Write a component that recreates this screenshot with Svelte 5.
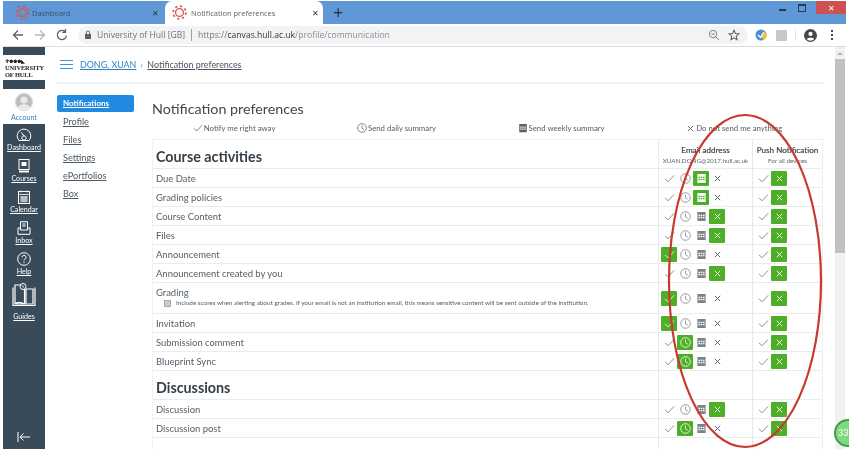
<script>
  const menu = ['Profile', 'Files', 'Settings', 'ePortfolios', 'Box'];
  const sections = [
    { title: 'Course activities', head: true, rows: [
      ['Due Date', 2], ['Grading policies', 2], ['Course Content', 3], ['Files', 3],
      ['Announcement', 0], ['Announcement created by you', 3],
      ['Grading', 0, 'Include scores when alerting about grades. If your email is not an institution email, this means sensitive content will be sent outside of the institution.'],
      ['Invitation', 0], ['Submission comment', 1], ['Blueprint Sync', 1]
    ]},
    { title: 'Discussions', rows: [['Discussion', 3], ['Discussion post', 1]] },
    { title: 'Conversations', rows: [] }
  ];
  const kinds = [0, 1, 2, 3];
  const sizes = [11, 11, 11, 9];
</script>

{#snippet glyph(kind, size = 11)}
  <svg class="glyph" width={size} height={size} viewBox="0 0 12 12" aria-hidden="true">
    {#if kind === 0}
      <path d="M1.2 6.4 4.4 9.6 11 2.6" fill="none" stroke="currentColor" stroke-width="0.9"/>
    {:else if kind === 1}
      <circle cx="6" cy="6" r="5.2" fill="none" stroke="currentColor" stroke-width="0.9"/>
      <path d="M6 2.8V6.3L8.5 7.8" fill="none" stroke="currentColor" stroke-width="0.9"/>
    {:else if kind === 2}
      <path fill-rule="evenodd" fill="currentColor" d="M1.5 1.2h9v9.8h-9zM2.7 4.2v1.5h1.7V4.2zM5.2 4.2v1.5h1.7V4.2zM7.7 4.2v1.5h1.6V4.2zM2.7 6.500V8h1.7V6.500zM5.2 6.500V8h1.7V6.500zM7.7 6.500V8h1.6V6.500z"/>
    {:else}
      <path d="M2.4 2.4 9.6 9.6M9.6 2.4 2.4 9.6" fill="none" stroke="currentColor" stroke-width="1.200"/>
    {/if}
  </svg>
{/snippet}

{#snippet canvasLogo()}
  <svg width="15" height="15" viewBox="0 0 16 16" aria-hidden="true">
    <circle cx="8" cy="8" r="4.2" fill="none" stroke="#d9554a" stroke-width="1.400"/>
    <circle cx="8" cy="8" r="6.8" fill="none" stroke="#d9554a" stroke-width="1.800" stroke-dasharray="2.4 2.9"/>
  </svg>
{/snippet}

{#snippet choices(active)}
  <div class="choices">
    {#each kinds as k}
      <span class="choice k{k}" class:on={k === active}>{@render glyph(k, sizes[k])}</span>
    {/each}
  </div>
{/snippet}

<div class="page">
  <header class="tabs">
    <div class="tab back">
      {@render canvasLogo()}
      <span class="tabname">Dashboard</span>
      <span class="tabx">✕</span>
    </div>
    <div class="tab front">
      {@render canvasLogo()}
      <span class="tabname">Notification preferences</span>
      <span class="tabx">✕</span>
    </div>
    <span class="plus">+</span>
    <div class="winctl">
      <span class="min"></span>
      <span class="restore"></span>
      <span class="close">✕</span>
    </div>
  </header>

  <div class="toolbar">
    <svg class="tool first" width="14" height="14" viewBox="0 0 14 14"><path d="M12 7H2.500M7 2.500 2.500 7 7 11.500" fill="none" stroke="#5f6368" stroke-width="1.300"/></svg>
    <svg class="tool" width="14" height="14" viewBox="0 0 14 14"><path d="M2 7h9.500M7 2.500 11.500 7 7 11.500" fill="none" stroke="#b4b8bd" stroke-width="1.300"/></svg>
    <svg class="tool" width="14" height="14" viewBox="0 0 14 14"><path d="M11.500 7.500A4.600 4.600 0 1 1 10 3.500M10.500 1v3.300H7.200" fill="none" stroke="#5f6368" stroke-width="1.300"/></svg>
    <div class="omni">
      <svg width="8" height="10" viewBox="0 0 8 10"><rect x="1" y="4" width="6" height="5" fill="#5f6368"/><path d="M2.300 4V2.800a1.700 1.700 0 0 1 3.400 0V4" fill="none" stroke="#5f6368"/></svg>
      <span class="org">University of Hull [GB]</span>
      <span class="bar"></span>
      <span class="url">https://<b>canvas.hull.ac.uk</b><i>/profile/communication</i></span>
      <span class="spacer"></span>
      <svg width="12" height="12" viewBox="0 0 13 13"><circle cx="5.500" cy="5.500" r="4" fill="none" stroke="#7a7f85"/><path d="M8.500 8.500 12 12M3.500 5.500h4" stroke="#7a7f85" fill="none"/></svg>
      <svg class="star" width="12" height="12" viewBox="0 0 13 13"><path d="M6.500 1.300 8 4.900l3.900.3-3 2.500.9 3.800-3.300-2-3.300 2 .9-3.800-3-2.500 3.900-.3z" fill="none" stroke="#5a5f65" stroke-width="1.100"/></svg>
    </div>
    <svg class="ext" width="12" height="12" viewBox="0 0 12 12"><circle cx="6" cy="6" r="5.500" fill="#4d8fd6"/><path d="M6 6 11 3A5.500 5.500 0 0 1 8 11z" fill="#ecc13c"/><path d="M3 6 5.500 8.500 9 3" fill="none" stroke="#fff" stroke-width="1.300"/></svg>
    <span class="ext2"></span>
    <span class="sep"></span>
    <svg class="acct" width="13" height="13" viewBox="0 0 13 13"><circle cx="6.500" cy="6.500" r="6.500" fill="#44484d"/><circle cx="6.500" cy="4.900" r="2.100" fill="#fff"/><path d="M2.700 10c1-1.700 6.600-1.700 7.600 0a5 5 0 0 1-7.600 0z" fill="#fff"/></svg>
    <span class="dots"><i></i><i></i><i></i></span>
  </div>

  <div class="body">
    <nav class="rail">
      <div class="logo">
        <span class="crest">♆♚♚♚◣</span>
        <span>UNIVERSITY</span>
        <span>OF HULL</span>
      </div>
      <a class="account" href="#a">
        <svg width="18" height="18" viewBox="0 0 18 18"><circle cx="9" cy="9" r="8.500" fill="#bdbdbd" stroke="#d5d5d5"/><circle cx="9" cy="7" r="3.500" fill="#e8e8e8"/><path d="M2.800 15c1-5 11.400-5 12.400 0a8.500 8.500 0 0 1-12.400 0z" fill="#e8e8e8"/></svg>
        <span>Account</span>
      </a>
      <a class="item" href="#d">
        <svg width="16" height="14" viewBox="0 0 16 14"><path d="M3 12.500A6.800 6.800 0 1 1 13 12.500" fill="none" stroke="#fff"/><path d="M3 12.500h10M8 8 5.500 4.500M5.800 10a2.200 2.200 0 1 0 4.400 0 2.200 2.200 0 0 0-4.400 0z" fill="none" stroke="#fff"/></svg>
        <span>Dashboard</span>
      </a>
      <a class="item" href="#c">
        <svg width="14" height="14" viewBox="0 0 14 14"><rect x="2" y=".5" width="10" height="10" fill="none" stroke="#fff"/><rect x="4.500" y="3" width="5" height="4" fill="#fff"/><path d="M2 12.500h10" stroke="#fff" stroke-width="2"/></svg>
        <span>Courses</span>
      </a>
      <a class="item" href="#l">
        <svg width="14" height="14" viewBox="0 0 14 14"><rect x="1.500" y="1.500" width="11" height="12" fill="none" stroke="#fff"/><path d="M1.500 4.500h11M3 7h8M3 9h8M3 11h8M5 6v6.500M7 6v6.500M9 6v6.500M4 .5v2M10 .5v2" fill="none" stroke="#fff" stroke-width=".8"/></svg>
        <span>Calendar</span>
      </a>
      <a class="item" href="#i">
        <svg width="14" height="14" viewBox="0 0 14 14"><path d="M3.500 8V.7h7V8M1 7h2.500v2h7V7H13v6.300H1zM5.300 3h3.400M5.300 5h3.400" fill="none" stroke="#fff"/></svg>
        <span>Inbox</span>
      </a>
      <a class="item" href="#h">
        <svg width="14" height="14" viewBox="0 0 14 14"><circle cx="7" cy="7" r="6.300" fill="none" stroke="#fff"/><path d="M5 5.300a2 2 0 1 1 2.800 1.800c-.6.300-.8.700-.8 1.400M7 9.600v1.400" fill="none" stroke="#fff"/></svg>
        <span>Help</span>
      </a>
      <a class="item guides" href="#g">
        <svg width="24" height="24" viewBox="0 0 24 24"><path d="M1 4.500v18h22v-18M3 2h8l1.500 1.500V21H3zM14 6h7v15h-7zM3 21c3-3 6-2 9.500 0" fill="none" stroke="#fff" stroke-width="1.200"/><circle cx="11" cy="3.500" r="3" fill="#394b58" stroke="#fff"/><path d="M9.800 2.400 12.200 4.600" stroke="#fff"/></svg>
        <span>Guides</span>
      </a>
      <span class="grow"></span>
      <svg class="collapse" width="14" height="10" viewBox="0 0 14 10"><path d="M1 0v10M13 5H3M6.500 1.500 3 5 6.500 8.500" fill="none" stroke="#fff"/></svg>
    </nav>

    <div class="content">
      <div class="crumbs">
        <span class="burger"><i></i><i></i><i></i></span>
        <a class="user" href="#u">DONG, XUAN</a>
        <span class="chev">›</span>
        <a class="current" href="#n">Notification preferences</a>
      </div>
      <div class="columns">
        <aside class="menu">
          <a class="sel" href="#n">Notifications</a>
          {#each menu as m}<a href="#m">{m}</a>{/each}
        </aside>
        <main class="main">
          <h1>Notification preferences</h1>
          <div class="legend">
            <span>{@render glyph(0, 10)} Notify me right away</span>
            <span>{@render glyph(1, 10)} Send daily summary</span>
            <span>{@render glyph(2, 10)} Send weekly summary</span>
            <span>{@render glyph(3, 9)} Do not send me anything</span>
          </div>
          <div class="table">
            {#each sections as s}
              <div class="row sect">
                <h2 class="label">{s.title}</h2>
                <div class="cell colhead">
                  {#if s.head}<strong>Email address</strong><small>XUAN.DONG@2017.hull.ac.uk</small>{/if}
                </div>
                <div class="cell colhead push">
                  {#if s.head}<strong>Push Notification</strong><small>For all devices</small>{/if}
                </div>
              </div>
              {#each s.rows as r}
                <div class="row" class:tall={r[2]}>
                  <div class="label">
                    {r[0]}
                    {#if r[2]}<div class="note"><span class="box"></span>{r[2]}</div>{/if}
                  </div>
                  <div class="cell">{@render choices(r[1])}</div>
                  <div class="cell push">
                    <div class="choices">
                      <span class="choice k0">{@render glyph(0)}</span>
                      <span class="choice k3 on">{@render glyph(3, 9)}</span>
                    </div>
                  </div>
                </div>
              {/each}
            {/each}
          </div>
        </main>
      </div>
    </div>

    <div class="scrollbar">
      <span class="up"></span>
      <span class="thumb"></span>
    </div>
  </div>

  <svg class="ring" width="849" height="449" viewBox="0 0 849 449" aria-hidden="true">
    <ellipse cx="745" cy="281" rx="76" ry="166" fill="none" stroke="#c8392e" stroke-width="2.200"/>
  </svg>
  <div class="bubble">33</div>
</div>

<style>
  :global(body) { margin: 0; background: #fff; }
  .page {
    position: relative;
    width: 849px;
    height: 449px;
    overflow: hidden;
    display: flex;
    flex-direction: column;
    padding: 1px 3px 0 3px;
    box-sizing: border-box;
    background: #fff;
    font-family: Lato, "Open Sans", sans-serif;
    color: #4d5963;
    filter: blur(0.4px);
  }
  a { color: inherit; }

  .tabs {
    height: 23px;
    flex: none;
    background: #6097d6;
    display: flex;
    align-items: stretch;
    font-family: "Open Sans", sans-serif;
    font-size: 7.500px;
  }
  .tab {
    display: flex;
    align-items: center;
    box-sizing: border-box;
    border-radius: 7px 7px 0 0;
  }
  .tab.back { width: 162px; padding-left: 12px; color: #33506f; }
  .tab.front { width: 158px; padding-left: 7px; background: #fff; color: #5f6368; }
  .tabname { margin-left: 4px; flex: 1; }
  .tab.back .tabname { margin-left: 2px; }
  .tabx { font-size: 8px; color: #333; margin-right: 4px; }
  .tab.back .tabx { margin-right: 6px; }
  .plus { font-size: 18px; color: #1f2d3d; margin-left: 10px; line-height: 23px; }
  .winctl { margin-left: auto; display: flex; align-items: flex-start; height: 13px; }
  .min { width: 7px; height: 2px; background: #2b3b4e; margin: 8px 12px 0 0; }
  .restore { width: 6px; height: 5px; border: 1.500px solid #2b3b4e; border-top-width: 2.500px; margin: 3px 10px 0 0; }
  .close { width: 30px; height: 13px; background: #cf5050; color: #fff; font-size: 8px; line-height: 13px; text-align: center; }

  .toolbar {
    height: 23px;
    flex: none;
    box-sizing: border-box;
    display: flex;
    align-items: center;
    border-bottom: 1px solid #dcdcdc;
    background: #fff;
  }
  .tool { margin-right: 8px; flex: none; }
  .tool.first { margin-left: 8px; }
  .omni {
    width: 670px;
    margin-left: 1px;
    height: 18px;
    flex: none;
    box-sizing: border-box;
    padding: 0 8px 0 6px;
    background: #f1f3f4;
    border-radius: 9px;
    display: flex;
    align-items: center;
    font-family: "Open Sans", sans-serif;
    font-size: 8.600px;
    color: #70757a;
    white-space: nowrap;
  }
  .org { margin-left: 5px; }
  .bar { width: 1px; height: 12px; background: #9aa0a6; margin: 0 6px; }
  .url b { font-weight: 400; color: #33373b; }
  .url i { font-style: normal; color: #8b9096; }
  .spacer { flex: 1; }
  .star { margin-left: 8px; }
  .ext { margin-left: 7px; flex: none; }
  .ext2 { width: 11px; height: 11px; background: #c4c8ca; margin-left: 9px; flex: none; }
  .sep { width: 1px; height: 12px; background: #e3e3e3; margin: 0 8px; flex: none; }
  .acct { flex: none; }
  .dots { display: flex; flex-direction: column; gap: 2px; margin-left: 14px; }
  .dots i { width: 2px; height: 2px; background: #44484d; }

  .body { flex: 1; display: flex; min-height: 0; }

  .rail {
    width: 42px;
    flex: none;
    padding-top: 8px;
    background: #394b58;
    display: flex;
    flex-direction: column;
    align-items: center;
    color: #fff;
    font-size: 7.100px;
    box-sizing: border-box;
    padding-bottom: 7px;
  }
  .logo {
    align-self: stretch;
    height: 25px;
    background: #fff;
    color: #222;
    font: 700 6.400px/6.500px "Liberation Serif", serif;
    display: flex;
    flex-direction: column;
    padding: 4px 0 0 2px;
    box-sizing: border-box;
    letter-spacing: -0.1px;
    white-space: nowrap;
  }
  .crest { font-size: 5px; line-height: 6px; letter-spacing: 0; }
  .account {
    margin-top: 9px;
    align-self: stretch;
    height: 35px;
    background: #fff;
    color: #2b85c5;
    display: flex;
    flex-direction: column;
    align-items: center;
    padding-top: 4px;
    box-sizing: border-box;
    text-decoration: none;
    gap: 2px;
  }
  .item {
    margin-top: 3px;
    height: 28px;
    display: flex;
    flex-direction: column;
    align-items: center;
    justify-content: flex-end;
    gap: 1px;
    color: #fff;
    text-decoration: underline;
  }
  .account + .item { margin-top: 0; }
  .guides { height: 42px; margin-top: 3px; gap: 5px; }
  .grow { flex: 1; }

  .content { width: 778px; flex: none; padding-left: 12px; box-sizing: border-box; }
  .crumbs {
    height: 37px;
    box-sizing: border-box;
    border-bottom: 2px solid #f1f1f1;
    display: flex;
    align-items: center;
    font-size: 8.900px;
    padding-left: 3px;
  }
  .burger { display: flex; flex-direction: column; gap: 3px; margin-right: 7px; }
  .burger i { width: 13px; height: 1px; background: #3b94d3; }
  .user { color: #2d84c4; }
  .chev { width: 11px; text-align: center; color: #888; }
  .current { color: #4a5560; }

  .columns { display: flex; margin-top: 11px; }
  .menu { width: 77px; flex: none; margin-right: 18px; display: flex; flex-direction: column; font-size: 9.200px; }
  .menu a { height: 18px; line-height: 18px; padding-left: 6px; color: #4d5963; }
  .menu a.sel {
    height: 17px;
    line-height: 17px;
    margin-bottom: 1px;
    background: #1f8ae0;
    border-radius: 2px;
    color: #fff;
    font-size: 8px;
    font-weight: 700;
  }
  .main { width: 671px; flex: none; }
  h1 { margin: 4px 0 0; font-size: 14.300px; font-weight: 400; line-height: 20px; color: #3d4850; }
  .legend {
    display: flex;
    justify-content: space-around;
    margin-top: 2px;
    height: 14px;
    align-items: center;
    font-size: 7.800px;
    color: #55606a;
  }
  .legend span { display: flex; align-items: center; gap: 1px; }
  .table { margin-top: 4px; border-top: 1px solid #eef0f1; border-left: 1px solid #f1f2f3; border-right: 1px solid #eceeef; }

  .row { display: flex; height: 19px; box-sizing: border-box; border-bottom: 1px solid #eaecee; }
  .row.tall { height: 31px; }
  .row.sect { height: 29px; }
  .label { width: 505px; flex: none; box-sizing: border-box; padding: 0 0 0 3px; font-size: 9.450px; line-height: 19px; color: #55606a; margin: 0; }
  .row.sect .label { font-size: 14.300px; font-weight: 700; line-height: 34px; color: #363f47; white-space: nowrap; }
  .tall .label { line-height: 13px; padding-top: 3px; }
  .note { display: flex; align-items: center; font-size: 6.350px; line-height: 8px; margin-left: 8px; white-space: nowrap; color: #55606a; }
  .box { width: 5px; height: 5px; background: #c9cbcd; border: .5px solid #aaa; margin-right: 5px; flex: none; }
  .cell { width: 94px; flex: none; box-sizing: border-box; border-left: 1px solid #e6e8ea; display: flex; align-items: center; }
  .cell.push { width: 70px; }
  .colhead { flex-direction: column; justify-content: flex-end; padding-bottom: 3px; text-align: center; font-size: 8.100px; white-space: nowrap; color: #3e4850; }
  .colhead strong { font-weight: 400; -webkit-text-stroke: 0.2px currentColor; line-height: 11px; }
  .colhead small { font-size: 6.300px; line-height: 9px; color: #5c6670; }
  .choices { display: flex; padding-left: 2px; height: 15px; }
  .choice { width: 16px; height: 15px; display: flex; align-items: center; justify-content: center; border-radius: 1px; flex: none; }
  .k0 { color: #6f7a82; }
  .k1 { color: #7d868d; }
  .k2 { color: #7b8288; }
  .k3 { color: #47525b; }
  .choice.on { background: #4fae28; color: #fff; }
  .glyph { display: block; flex: none; }

  .scrollbar { width: 10px; margin-left: 12px; flex: none; background: #f1f1f1; display: flex; flex-direction: column; align-items: center; }
  .up { width: 0; border: 3px solid transparent; border-bottom-color: #b5b5b5; box-sizing: border-box; height: 6px; margin: 2px 0 4px; flex: none; }
  .thumb { width: 100%; height: 194px; background: #c1c1c1; }

  .ring { position: absolute; left: 0; top: 0; pointer-events: none; }
  .bubble {
    position: absolute;
    left: 834px;
    top: 419px;
    width: 28px;
    height: 28px;
    border-radius: 50%;
    background: #7fd97f;
    border: 2px solid #3f9f4f;
    box-sizing: border-box;
    color: #fff;
    font-size: 9px;
    line-height: 24px;
    padding-left: 2px;
  }
</style>
